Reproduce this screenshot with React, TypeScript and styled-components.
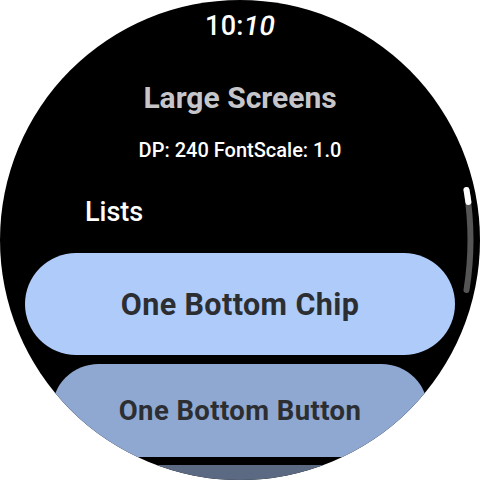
import React from "react";
import styled, { createGlobalStyle } from "styled-components";

const Global = createGlobalStyle`
  html, body {
    margin: 0;
    padding: 0;
    background: #ffffff;
  }
  body {
    font-family: Roboto, "Noto Sans", sans-serif;
  }
`;

const Screen = styled.div`
  position: relative;
  width: 480px;
  height: 480px;
  border-radius: 50%;
  overflow: hidden;
  background: #000000;
  display: flex;
  flex-direction: column;
  align-items: center;
`;

const Time = styled.div`
  margin-top: 11px;
  font-size: 27px;
  line-height: 30px;
  font-weight: 500;
  color: #ffffff;
  letter-spacing: 0.3px;
`;

const Slant = styled.span`
  display: inline-block;
  transform: skewX(-9deg);
`;

const Title = styled.div`
  margin-top: 39px;
  font-size: 30px;
  line-height: 36px;
  font-weight: 700;
  color: #c6c6ca;
`;

const Subtitle = styled.div`
  margin-top: 22px;
  font-size: 20px;
  line-height: 24px;
  font-weight: 500;
  color: #ffffff;
`;

const SectionLabel = styled.div`
  align-self: flex-start;
  margin-top: 35px;
  padding-left: 85px;
  font-size: 27px;
  line-height: 30px;
  font-weight: 500;
  color: #ffffff;
`;

const Pill = styled.div<{ $w: number; $h: number; $bg: string; $gap: number; $size: number }>`
  flex: none;
  margin-top: ${(p) => p.$gap}px;
  width: ${(p) => p.$w}px;
  height: ${(p) => p.$h}px;
  border-radius: ${(p) => p.$h / 2}px;
  background: ${(p) => p.$bg};
  display: flex;
  align-items: center;
  justify-content: center;
  font-size: ${(p) => p.$size}px;
  font-weight: 700;
  color: #2c2e31;
  letter-spacing: 0.4px;
`;

const Scrollbar = styled.svg`
  position: absolute;
  left: 456px;
  top: 180px;
`;

function ScrollIndicator() {
  return (
    <Scrollbar width="24" height="120" viewBox="0 0 24 120">
      <path
        d="M10.5 10 Q18.5 60 10.5 110"
        stroke="#555555"
        strokeWidth="6"
        strokeLinecap="round"
        fill="none"
      />
      <path
        d="M10.5 10 Q11.6 16 12.4 22"
        stroke="#ffffff"
        strokeWidth="6"
        strokeLinecap="round"
        fill="none"
      />
    </Scrollbar>
  );
}

export default function App() {
  return (
    <>
      <Global />
      <Screen>
        <Time>
          10:<Slant>10</Slant>
        </Time>
        <Title>Large Screens</Title>
        <Subtitle>DP: 240 FontScale: 1.0</Subtitle>
        <SectionLabel>Lists</SectionLabel>
        <Pill $w={430} $h={102} $bg="#aecbfa" $gap={26} $size={30.5}>
          One Bottom Chip
        </Pill>
        <Pill $w={376} $h={93} $bg="#8fa8d1" $gap={9} $size={27.5}>
          One Bottom Button
        </Pill>
        <Pill $w={376} $h={93} $bg="#5b6a82" $gap={8} $size={28} />
        <ScrollIndicator />
      </Screen>
    </>
  );
}
